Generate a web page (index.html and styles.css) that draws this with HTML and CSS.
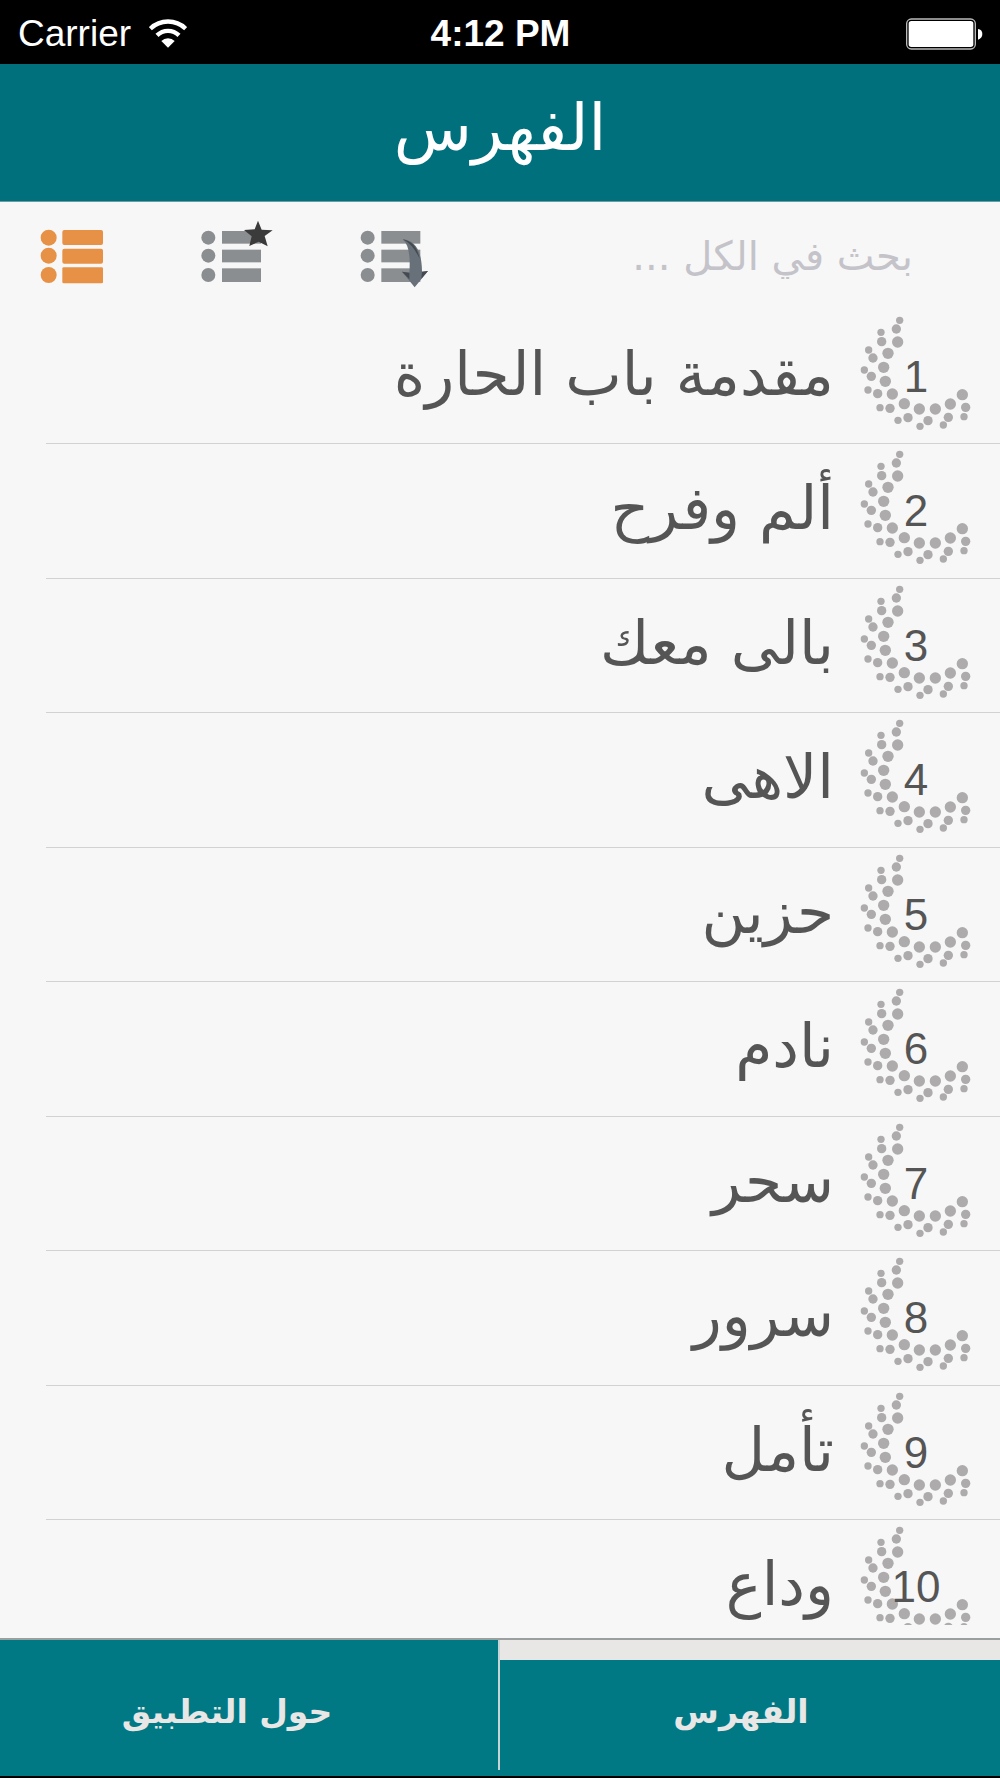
FILE: index.html
```
<!DOCTYPE html>
<html lang="ar" dir="rtl">
<head>
  <meta charset="UTF-8" />
  <meta name="viewport" content="width=device-width, initial-scale=1.0"/>
  <title>الفهرس</title>
  <link rel="stylesheet" href="styles.css">
</head>
<body>

  <!-- dotted ornament shared by all rows -->
  <svg class="defs" aria-hidden="true">
    <symbol id="dots" viewBox="60 45 336 345">
      <g fill="#adabac">
        <circle cx="179" cy="61" r="11"/>
        <circle cx="169" cy="87" r="14"/>
        <circle cx="173" cy="126" r="17"/>
        <circle cx="123" cy="97" r="11"/>
        <circle cx="125" cy="125" r="14"/>
        <circle cx="144" cy="160" r="17"/>
        <circle cx="86" cy="150" r="11"/>
        <circle cx="99" cy="174" r="14"/>
        <circle cx="131" cy="202" r="17"/>
        <circle cx="73" cy="210" r="11"/>
        <circle cx="94" cy="229" r="14"/>
        <circle cx="136" cy="244" r="17"/>
        <circle cx="84" cy="270" r="11"/>
        <circle cx="113" cy="281" r="14"/>
        <circle cx="157" cy="282" r="17"/>
        <circle cx="120" cy="323" r="11"/>
        <circle cx="150" cy="325" r="14"/>
        <circle cx="193" cy="311" r="17"/>
        <circle cx="174" cy="361" r="11"/>
        <circle cx="204" cy="353" r="14"/>
        <circle cx="238" cy="327" r="17"/>
        <circle cx="240" cy="379" r="11"/>
        <circle cx="264" cy="362" r="14"/>
        <circle cx="286" cy="327" r="17"/>
        <circle cx="310" cy="375" r="11"/>
        <circle cx="325" cy="352" r="14"/>
        <circle cx="331" cy="312" r="17"/>
        <circle cx="372" cy="350" r="11"/>
        <circle cx="377" cy="322" r="14"/>
        <circle cx="367" cy="284" r="17"/>
      </g>
    </symbol>
  </svg>

  <div class="status" dir="ltr">
    <div class="carrier">
      <span>Carrier</span>
      <svg width="38" height="30" viewBox="0 0 114 90" aria-hidden="true">
        <path d="M4 29 A76 76 0 0 1 110 29" fill="none" stroke="#fff" stroke-width="13"/>
        <path d="M24 49 A47 47 0 0 1 90 49" fill="none" stroke="#fff" stroke-width="13"/>
        <path d="M57 86 L37 66 A28 28 0 0 1 77 66 Z" fill="#fff"/>
      </svg>
    </div>
    <time>4:12 PM</time>
    <div class="battery">
      <svg width="78" height="32" viewBox="0 0 234 96" aria-hidden="true">
        <rect x="5" y="3" width="206" height="90" rx="14" fill="none" stroke="#bbb" stroke-width="4"/>
        <rect x="11" y="9" width="194" height="78" rx="8" fill="#fff"/>
        <path d="M219 33 Q232 35 232 48 Q232 61 219 65 Z" fill="#fff"/>
      </svg>
    </div>
  </div>

  <header>
    <h1>الفهرس</h1>
  </header>

  <div class="toolbar" dir="ltr">
    <button type="button" aria-label="الكل">
      <svg width="80" height="72" viewBox="0 0 240 216" fill="#e69145">
        <circle cx="38" cy="65" r="24"/>
        <circle cx="38" cy="119" r="24"/>
        <circle cx="38" cy="177" r="24"/>
        <rect x="79" y="42" width="122" height="45" rx="6"/>
        <rect x="79" y="98" width="122" height="45" rx="6"/>
        <rect x="79" y="154" width="122" height="48" rx="4"/>
      </svg>
    </button>
    <button type="button" aria-label="المفضلة">
      <svg width="80" height="72" viewBox="0 0 240 216" fill="#8a8e91">
        <circle cx="37" cy="65" r="21"/>
        <circle cx="37" cy="119" r="21"/>
        <circle cx="37" cy="177" r="21"/>
        <rect x="78" y="45" width="117" height="38"/>
        <rect x="78" y="101" width="117" height="38"/>
        <rect x="78" y="157" width="117" height="41"/>
        <path d="M186 14 L197 41 L230 43 L206 60 L215 91 L188 77 L160 90 L167 61 L144 42 L176 40 Z" fill="#3b3b3b"/>
      </svg>
    </button>
    <button type="button" aria-label="التنزيلات">
      <svg width="80" height="72" viewBox="0 0 240 216" fill="#8a8e91">
        <circle cx="35" cy="65" r="21"/>
        <circle cx="35" cy="119" r="21"/>
        <circle cx="35" cy="177" r="21"/>
        <rect x="76" y="45" width="117" height="38"/>
        <rect x="76" y="101" width="117" height="38"/>
        <rect x="76" y="157" width="117" height="41"/>
        <path d="M140 70 Q197 74 198 167 L216 165 L176 214 L138 167 L160 170 Q166 92 140 70 Z" fill="#68707a"/>
        <path d="M140 70 Q180 76 191 128 Q170 84 140 70 Z M198 167 L216 165 L196 188 Z M138 167 L160 170 L160 190 Z" fill="#454a50"/>
      </svg>
    </button>
    <input type="search" dir="rtl" placeholder="بحث في الكل ..." aria-label="بحث في الكل">
  </div>

  <ol class="index">
    <li><div class="num"><svg><use href="#dots"/></svg><span>1</span></div><a href="#1">مقدمة باب الحارة</a></li>
    <li><div class="num"><svg><use href="#dots"/></svg><span>2</span></div><a href="#2">ألم وفرح</a></li>
    <li><div class="num"><svg><use href="#dots"/></svg><span>3</span></div><a href="#3">بالى معك</a></li>
    <li><div class="num"><svg><use href="#dots"/></svg><span>4</span></div><a href="#4">الاهى</a></li>
    <li><div class="num"><svg><use href="#dots"/></svg><span>5</span></div><a href="#5">حزين</a></li>
    <li><div class="num"><svg><use href="#dots"/></svg><span>6</span></div><a href="#6">نادم</a></li>
    <li><div class="num"><svg><use href="#dots"/></svg><span>7</span></div><a href="#7">سحر</a></li>
    <li><div class="num"><svg><use href="#dots"/></svg><span>8</span></div><a href="#8">سرور</a></li>
    <li><div class="num"><svg><use href="#dots"/></svg><span>9</span></div><a href="#9">تأمل</a></li>
    <li><div class="num"><svg><use href="#dots"/></svg><span>10</span></div><a href="#10">وداع</a></li>
  </ol>

  <nav class="tabs">
    <a class="active" href="#index">الفهرس</a>
    <a class="about" href="#about">حول التطبيق</a>
  </nav>

</body>
</html>
```
FILE: styles.css
```
* {
  box-sizing: border-box;
}
body {
  font-family: "DejaVu Sans", "Liberation Sans", sans-serif;
  margin: 0;
  min-height: 100vh;
  display: flex;
  flex-direction: column;
  background-color: #f7f7f7;
  color: #555;
}
a {
  color: inherit;
  text-decoration: none;
}
.defs {
  display: none;
}

/* status bar */
.status {
  display: grid;
  grid-template-columns: 1fr auto 1fr;
  align-items: center;
  height: 64px;
  padding: 4px 17px 0 18px;
  background-color: #000;
  color: #fff;
  font-family: "Liberation Sans", Arial, sans-serif;
  font-size: 37px;
}
.status time {
  font-weight: bold;
}
.carrier {
  display: flex;
  align-items: center;
  gap: 18px;
}
.battery {
  display: flex;
  justify-content: flex-end;
}

header {
  height: 138px;
  background-color: #00707c;
  border-bottom: 1px solid #6f9a9f;
  color: #fff;
  text-align: center;
}
h1 {
  margin: 0;
  font-size: 64px;
  font-weight: normal;
  line-height: 100px;
  padding-top: 14px;
}

/* list filters and search */
.toolbar {
  display: flex;
  align-items: center;
  gap: 80px;
  height: 108px;
  padding: 0 87px 0 36px;
}
.toolbar button {
  padding: 0 0 8px;
  border: none;
  background: none;
  cursor: pointer;
}
.toolbar svg {
  display: block;
}
.toolbar input {
  flex: 1;
  min-width: 0;
  padding: 0;
  border: none;
  outline: none;
  background: none;
  color: #555;
  font-family: inherit;
  font-size: 40px;
}
.toolbar input::placeholder {
  color: #c4c3c9;
  opacity: 1;
}

/* index rows, the last one is cut by the tabs */
.index {
  flex: 1;
  display: grid;
  grid-template-rows: repeat(9, 1fr) 118px;
  margin: 0;
  padding: 0;
  list-style: none;
}
.index li {
  display: flex;
  gap: 26px;
  margin-left: 46px;
  padding: 5px 28px 0 0;
  border-bottom: 1px solid #d2d1d4;
  overflow: hidden;
}
.index li:last-child {
  border-bottom: none;
}
.index a {
  flex: 1;
  font-size: 60px;
  line-height: 118px;
  white-space: nowrap;
}
.num {
  display: grid;
  width: 112px;
  margin-bottom: 13px;
  overflow: hidden;
}
.num svg, .num span {
  grid-area: 1 / 1;
}
.num svg {
  width: 112px;
  height: 115px;
}
.num span {
  font-family: "Liberation Sans", Arial, sans-serif;
  font-size: 44px;
  line-height: 124px;
  height: 115px;
  text-align: center;
}

/* bottom tabs */
.tabs {
  display: flex;
  height: 140px;
  background-color: #007985;
  border-top: 2px solid #9c9fa0;
  border-bottom: 2px solid #000;
  color: #e9e7e5;
  font-size: 33px;
  font-weight: bold;
  line-height: 100px;
  text-align: center;
}
.tabs a {
  width: 50%;
  padding-top: 22px;
}
.tabs .active {
  padding-top: 2px;
  padding-right: 18px;
  border-top: 20px solid #e9e7e5;
}
.tabs .about {
  margin-bottom: 6px;
  padding-right: 44px;
  border-right: 2px solid #c5d5d6;
}
```
